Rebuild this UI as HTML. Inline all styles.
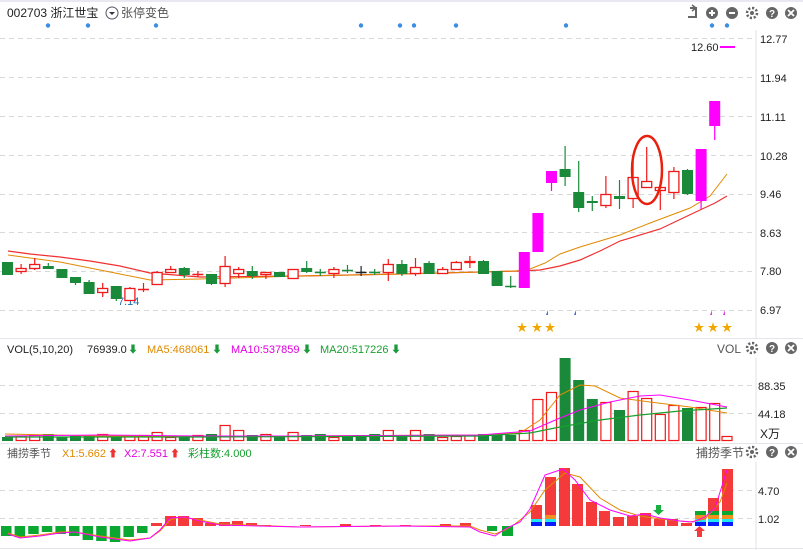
<!DOCTYPE html>
<html><head><meta charset="utf-8">
<style>
html,body{margin:0;padding:0;background:#fff;width:803px;height:550px;overflow:hidden;font-family:"Liberation Sans","Noto Sans CJK SC",sans-serif;}
svg{position:absolute;left:0;top:0}
text{font-family:"Liberation Sans","Noto Sans CJK SC",sans-serif;}
</style></head><body>
<svg id="s" width="803" height="550" xmlns="http://www.w3.org/2000/svg">
<rect x="0" y="0" width="803" height="2" fill="#e8e8f0"/>
<line x1="756" y1="30" x2="756" y2="338" stroke="#e0e0e0"/>
<line x1="756" y1="358" x2="756" y2="443" stroke="#e0e0e0"/>
<line x1="756" y1="462" x2="756" y2="550" stroke="#e0e0e0"/>
<line x1="0" y1="338.5" x2="803" y2="338.5" stroke="#e4e4ea"/>
<line x1="0" y1="443.5" x2="803" y2="443.5" stroke="#e4e4ea"/>
<line x1="0" y1="548.5" x2="803" y2="548.5" stroke="#e4e4ea"/>
<g stroke="#d8d8d8" stroke-dasharray="5,4">
<line x1="0" y1="38.5" x2="756" y2="38.5"/><line x1="0" y1="77.5" x2="756" y2="77.5"/><line x1="0" y1="116.5" x2="756" y2="116.5"/><line x1="0" y1="155.5" x2="756" y2="155.5"/><line x1="0" y1="194.5" x2="756" y2="194.5"/><line x1="0" y1="232.5" x2="756" y2="232.5"/><line x1="0" y1="271.5" x2="756" y2="271.5"/><line x1="0" y1="310.5" x2="756" y2="310.5"/>
<line x1="0" y1="385.5" x2="756" y2="385.5"/><line x1="0" y1="413.5" x2="756" y2="413.5"/>
<line x1="0" y1="490.5" x2="756" y2="490.5"/><line x1="0" y1="518.5" x2="756" y2="518.5"/>
</g>
<g font-size="12" fill="#222">
<text x="7" y="17">002703 浙江世宝</text>
<circle cx="112" cy="13" r="6" fill="none" stroke="#556"/><path d="M109 12 L115 12 L112 15Z" fill="#334"/>
<text x="121" y="17" fill="#555">张停变色</text>
<text x="760" y="43" font-size="11">12.77</text><text x="760" y="82" font-size="11">11.94</text><text x="760" y="121" font-size="11">11.11</text><text x="760" y="160" font-size="11">10.28</text><text x="760" y="198" font-size="11">9.46</text><text x="760" y="237" font-size="11">8.63</text><text x="760" y="275" font-size="11">7.80</text><text x="760" y="314" font-size="11">6.97</text>
<text x="691" y="51" font-size="11">12.60</text>
<text x="758" y="390" font-size="11">88.35</text><text x="758" y="418" font-size="11">44.18</text><text x="760" y="438" font-size="12">X万</text>
<text x="758" y="495" font-size="11">4.70</text><text x="758" y="523" font-size="11">1.02</text>
<text x="118" y="305" font-size="11" fill="#1a6fb0">7.14</text>
<text x="7" y="353" font-size="11">VOL(5,10,20)</text>
<text x="87" y="353" font-size="11">76939.0</text><text x="128" y="353" font-size="10" fill="#1a9a3a">⬇</text>
<text x="147" y="353" font-size="11" fill="#e08a00">MA5:468061</text><text x="212" y="353" font-size="10" fill="#1a9a3a">⬇</text>
<text x="231" y="353" font-size="11" fill="#e000e0">MA10:537859</text><text x="302" y="353" font-size="10" fill="#1a9a3a">⬇</text>
<text x="320" y="353" font-size="11" fill="#18a030">MA20:517226</text><text x="391" y="353" font-size="10" fill="#1a9a3a">⬇</text>
<text x="717" y="353" font-size="12" fill="#555">VOL</text>
<text x="7" y="457" font-size="11" fill="#555">捕捞季节</text>
<text x="62" y="457" font-size="11" fill="#e08a00">X1:5.662</text><text x="108" y="457" font-size="10" fill="#e33">⬆</text>
<text x="124" y="457" font-size="11" fill="#e000e0">X2:7.551</text><text x="170" y="457" font-size="10" fill="#e33">⬆</text>
<text x="188" y="457" font-size="11" fill="#18a030">彩柱数:4.000</text>
<text x="696" y="457" font-size="12" fill="#555">捕捞季节</text>
</g>
<g id="g"></g>
<ellipse cx="647" cy="170" rx="15" ry="34" fill="none" stroke="#e8200c" stroke-width="2.5"/>
</svg>
<script>
var g=document.getElementById('g'),h='';
function X(n){return 7+(n-1)*13.6;}
function icons(y){var xs=[717,745,771,0];var s='';
 s+='<circle cx="745" cy="'+y+'" r="6" fill="#777"/><text x="745" y="'+(y+4)+'" font-size="10" font-weight="bold" fill="#fff" text-anchor="middle">?</text>';
 s+='<circle cx="771" cy="'+y+'" r="6" fill="#777"/><path d="M768 '+(y-3)+'L774 '+(y+3)+'M774 '+(y-3)+'L768 '+(y+3)+'" stroke="#fff" stroke-width="1.8"/>';
 s+='<circle cx="718" cy="'+y+'" r="5" fill="none" stroke="#777" stroke-width="2.5" stroke-dasharray="2.2,1.7"/><circle cx="718" cy="'+y+'" r="2" fill="#777"/>';
 return s;}
h+=icons(13).replace(/cx="718"/g,'cx="745"').replace(/cx="745" cy="13" r="6" fill="#777"\/><text x="745"/,'cx="771" cy="13" r="6" fill="#777"/><text x="771"');
h='';
// top icons
h+='<path d="M690 8 L696 8 L696 17 L688 17" fill="none" stroke="#666" stroke-width="2"/><path d="M692 5 L696 8 L692 11" fill="none" stroke="#666" stroke-width="1.5"/>';
h+='<circle cx="712" cy="13" r="6" fill="#666"/><path d="M709 13H715M712 10V16" stroke="#fff" stroke-width="2"/>';
h+='<circle cx="732" cy="13" r="6" fill="#666"/><path d="M709 13H715" transform="translate(20,0)" stroke="#fff" stroke-width="2"/>';
h+='<circle cx="752" cy="13" r="5" fill="none" stroke="#666" stroke-width="2.5" stroke-dasharray="2.2,1.7"/><circle cx="752" cy="13" r="2" fill="#666"/>';
h+='<circle cx="772" cy="13" r="6" fill="#666"/><text x="772" y="17" font-size="10" font-weight="bold" fill="#fff" text-anchor="middle">?</text>';
h+='<circle cx="791" cy="13" r="6" fill="#666"/><path d="M788 10L794 16M794 10L788 16" stroke="#fff" stroke-width="1.8"/>';
function ic2(y){return '<circle cx="752" cy="'+y+'" r="5" fill="none" stroke="#666" stroke-width="2.5" stroke-dasharray="2.2,1.7"/><circle cx="752" cy="'+y+'" r="2" fill="#666"/>'+
'<circle cx="772" cy="'+y+'" r="6" fill="#666"/><text x="772" y="'+(y+4)+'" font-size="10" font-weight="bold" fill="#fff" text-anchor="middle">?</text>'+
'<circle cx="791" cy="'+y+'" r="6" fill="#666"/><path d="M788 '+(y-3)+'L794 '+(y+3)+'M794 '+(y-3)+'L788 '+(y+3)+'" stroke="#fff" stroke-width="1.8"/>';}
h+=ic2(348)+ic2(452);
// blue dots
[48,88,156,361,400,414,456,566,712,727].forEach(function(x){h+='<circle cx="'+x+'" cy="25.5" r="2.2" fill="#3a8ee6"/>';});
// stars
[522,537,550,699,713,727].forEach(function(x){h+='<text x="'+x+'" y="331" font-size="11" fill="#f0a800" text-anchor="middle">★</text>';});
[[548,'#3a6ee6'],[576,'#3a6ee6'],[712,'#e040e0'],[725,'#e040e0']].forEach(function(a){h+='<path d="M'+a[0]+' 310 L'+(a[0]-2)+' 315 L'+a[0]+' 315Z" fill="'+a[1]+'"/>';});
// MA lines
function pl(p,c,w){return '<polyline points="'+p+'" fill="none" stroke="'+c+'" stroke-width="'+(w||1)+'"/>';}
h+=pl('8,251 30,254 60,257 90,261 120,266 150,273 200,277 300,276 400,274 480,272 520,271 540,270 560,266 580,260 600,251 620,241 660,229 700,210 715,203 727,196','#f03030',1.2);
h+=pl('8,255 30,258 60,262 90,268 120,274 150,280 200,279 300,276 400,274 480,272 515,271 530,269 545,263 560,254 580,247 600,241 620,235 650,223 690,208 710,196 727,174','#e08a00',1);
// candles
var C=[[1,262,275,262,275,'g'],[2,268,272,264,274,'r'],[3,264,269,258,270,'r'],[4,266,269,263,269,'g'],[5,269,278,269,278,'g'],[6,277,283,277,285,'g'],[7,282,294,280,294,'g'],[8,288,293,283,297,'r'],[9,286,299,286,301,'g'],[10,288,301,287,301,'r'],[11,289,289,283,292,'r'],[12,272,285,271,285,'r'],[13,269,273,266,273,'r'],[14,268,275,267,278,'g'],[15,274,274,271,277,'r'],[16,274,284,274,285,'g'],[17,266,284,256,287,'r'],[18,269,274,267,278,'r'],[19,271,276,266,279,'g'],[20,272,275,272,279,'r'],[21,272,277,272,277,'g'],[22,269,279,269,279,'r'],[23,268,272,261,273,'g'],[24,272,272,269,276,'g'],[25,269,274,267,278,'r'],[26,270,270,265,273,'g'],[27,272,272,266,276,'k'],[28,272,272,269,275,'g'],[29,264,273,259,281,'r'],[30,264,274,260,276,'g'],[31,267,274,258,276,'r'],[32,263,274,261,274,'g'],[33,269,274,267,274,'r'],[34,262,270,261,270,'r'],[35,261,263,256,268,'r'],[36,261,274,260,274,'g'],[37,271,286,271,286,'g'],[38,286,286,276,288,'g'],[39,252,288,252,288,'m'],[40,213,252,213,252,'m'],[41,171,183,171,191,'m'],[42,169,177,146,186,'g'],[43,192,208,161,212,'g'],[44,201,203,196,211,'g'],[45,194,206,176,208,'r'],[46,196,199,180,209,'g'],[47,177,199,159,208,'r'],[48,181,188,147,188,'r'],[49,187,191,181,210,'r'],[50,171,193,167,199,'r'],[51,170,194,169,195,'g'],[52,149,201,149,209,'m'],[53,101,126,101,140,'m']];
C.forEach(function(c){var x=X(c[0]),col={r:'#f01818',g:'#1a8a3a',m:'#ff00ff',k:'#222'}[c[5]];
 h+='<line x1="'+(x+0.5)+'" y1="'+c[3]+'" x2="'+(x+0.5)+'" y2="'+c[4]+'" stroke="'+col+'" stroke-width="1.2"/>';
 if(c[1]==c[2]) h+='<line x1="'+(x-5)+'" y1="'+c[1]+'.5" x2="'+(x+6)+'" y2="'+c[1]+'.5" stroke="'+col+'" stroke-width="1.5"/>';
 else if(c[5]=='r') h+='<rect x="'+(x-4.5)+'" y="'+(c[1]+0.5)+'" width="10" height="'+(c[2]-c[1]-1)+'" fill="#fff" stroke="'+col+'" stroke-width="1.3"/>';
 else h+='<rect x="'+(x-5)+'" y="'+c[1]+'" width="11" height="'+(c[2]-c[1])+'" fill="'+col+'"/>';
});
h+='<line x1="720" y1="47" x2="735" y2="47" stroke="#ff00ff" stroke-width="2"/>';
// volume
for(var n=1;n<=53;n++){var c=C[n-1],x=X(n),t;
 var big={37:435,38:435,39:430,40:399,41:392,42:358,43:380,44:399,45:402,46:410,47:391,48:398,49:414,50:405,51:408,52:407,53:403};
 var sp={12:432,17:425,18:430,29:430,31:430,22:432};
 t=big[n]||sp[n]||(434+(n*7)%4);
 var red=(c[5]=='r'||c[5]=='m');
 if(red) h+='<rect x="'+(x-4.5)+'" y="'+(t+0.5)+'" width="10" height="'+(441-t-1)+'" fill="#fff" stroke="#f01818" stroke-width="1.2"/>';
 else h+='<rect x="'+(x-5)+'" y="'+t+'" width="11" height="'+(441-t)+'" fill="#1a8a3a"/>';
}
h+='<rect x="722" y="436.5" width="10" height="4" fill="#fff" stroke="#f01818" stroke-width="1.2"/>';
h+=pl('5,434 100,436 200,436 300,436 480,435 520,433 540,420 560,395 580,385 595,386 620,398 650,402 690,407 727,413','#e08a00');
h+=pl('5,436 100,435 200,436 300,436 480,435 530,431 560,418 580,410 610,402 640,396 660,395 690,400 727,407','#ff00ff');
h+=pl('5,437 200,437 480,436 530,433 560,427 600,420 640,415 680,411 727,408','#18a030',1.2);
// indicator
var gb=[536,537,534,532,534,536,540,541,542,537,533];
for(var i=0;i<11;i++){h+='<rect x="'+(1+i*13.6)+'" y="526" width="10.5" height="'+(gb[i]-526)+'" fill="#0aa830"/>';}
var rt=[[151,523],[165,516],[178,516],[192,518],[205,523],[219,522],[232,521],[246,523],[260,525],[300,525],[340,524],[370,525],[400,525],[440,524],[460,523]];
rt.forEach(function(a){h+='<rect x="'+a[0]+'" y="'+a[1]+'" width="11" height="'+(526-a[1])+'" fill="#f43a3a"/>';});
h+='<rect x="487" y="526" width="10" height="5" fill="#0aa830"/><rect x="502" y="526" width="11" height="10" fill="#0aa830"/>';
var big=[[531,505,1],[545,477,2],[559,468,0],[572,484,0],[586,502,0],[599,511,0],[613,517,0],[627,516,0],[640,513,0],[654,519,0],[667,519,0],[681,523,0],[695,511,3],[708,498,3],[722,469,3]];
big.forEach(function(a){var x=a[0];h+='<rect x="'+x+'" y="'+a[1]+'" width="11" height="'+(526-a[1])+'" fill="#f43a3a"/>';
 if(a[2]){h+='<rect x="'+x+'" y="522" width="11" height="4" fill="#0a1cff"/><rect x="'+x+'" y="519" width="11" height="3" fill="#20e8f0"/>';
 if(a[2]>=2)h+='<rect x="'+x+'" y="515" width="11" height="4" fill="#f09020"/>';
 if(a[2]==3)h+='<rect x="'+x+'" y="511" width="11" height="4" fill="#0aa830"/>';}
});
h+=pl('8,533 20,537 40,535 60,532 75,532 100,536 130,540 150,538 160,531 170,520 180,517 195,519 220,524 300,527 400,526 470,526 480,530 495,534 505,530 515,524 530,512 545,490 565,473 580,477 600,498 620,510 640,516 660,519 690,522 705,519 720,502 727,483','#e08a00');
h+=pl('8,534 20,538 40,536 60,533 75,532 100,537 130,541 150,538 160,530 170,518 185,517 200,521 220,525 300,527 400,526 470,527 480,532 495,536 505,529 520,522 530,509 545,475 563,469 575,480 590,500 610,510 630,516 645,514 660,518 680,521 693,522 705,517 715,508 727,470','#ff00ff');
h+='<path d="M656 505h5v5h3l-5.5 5l-5.5-5h3z" fill="#18b040"/><path d="M697 537h5v-6h3l-5.5-5l-5.5 5h3z" fill="#f43a3a"/>';
g.innerHTML=h;
</script>
</body></html>
